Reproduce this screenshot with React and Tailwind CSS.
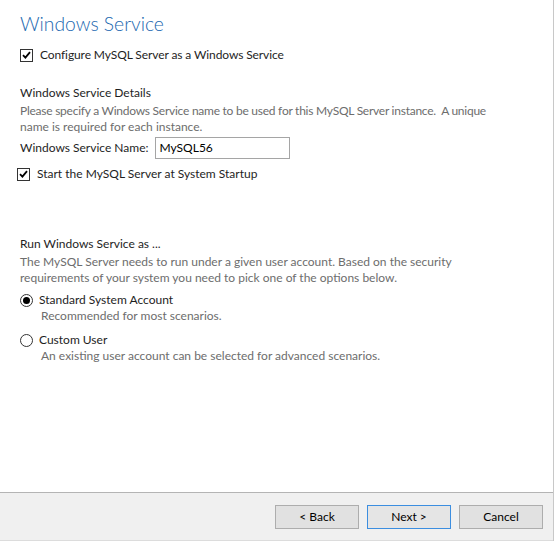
import React from "react";

const font = { fontFamily: 'Lato, "Liberation Sans", Arial, sans-serif' };

const Check = ({ checked }) => (
  <span className="flex h-[13px] w-[13px] shrink-0 items-center justify-center border border-[#333] bg-white">
    {checked && (
      <svg width="9" height="8" viewBox="0 0 9 8">
        <path d="M1 4.2 L3.4 6.6 L8 1.2" fill="none" stroke="#000" strokeWidth="1.8" />
      </svg>
    )}
  </span>
);

const Radio = ({ checked }) => (
  <span className="flex h-[13px] w-[13px] shrink-0 items-center justify-center rounded-full border border-[#333] bg-white">
    {checked && <span className="h-[7px] w-[7px] rounded-full bg-black" />}
  </span>
);

const Button = ({ children, focused }) => (
  <button
    className={
      "h-[24px] w-[84px] border text-[12px] text-black " +
      (focused ? "border-[#3c8ee0] bg-[#e5e5e5]" : "border-[#adadad] bg-[#e1e1e1]")
    }
  >
    {children}
  </button>
);

export default function App() {
  return (
    <div className="flex h-[542px] w-[556px] flex-col bg-white text-[12px] text-[#1e1e1e]" style={font}>
      <div className="flex flex-1 flex-col border-r border-[#c8c8c8] mr-[2px]">
        <div className="flex flex-1 flex-col px-[20px]">
          <h1 className="mt-[11px] text-[19.3px] font-light leading-[26px] text-[#2268b0]">Windows Service</h1>
          <label className="mt-[10px] flex items-center gap-[7px] leading-[16px]">
            <Check checked />
            <span className="tracking-[-0.1px]">Configure MySQL Server as a Windows Service</span>
          </label>

          <div className="mt-[22px] leading-[16px]">Windows Service Details</div>
          <div className="mt-[2px] leading-[16px] text-[#6d6d6d]">
            <span className="tracking-[-0.25px]">
              Please specify a Windows Service name to be used for this MySQL Server instance.&nbsp; A unique
            </span>
            <br />
            name is required for each instance.
          </div>
          <div className="mt-[2px] flex items-center gap-[7px]">
            <span>Windows Service Name:</span>
            <div className="flex h-[22px] w-[135px] items-center border border-[#a5a5a5] px-[3px] text-black">
              MySQL56
            </div>
          </div>
          <label className="ml-[-3px] mt-[7px] flex items-center gap-[7px] leading-[16px]">
            <Check checked />
            <span>Start the MySQL Server at System Startup</span>
          </label>

          <div className="mt-[54px] leading-[16px]">Run Windows Service as ...</div>
          <div className="mt-[2px] leading-[16px] text-[#6d6d6d]">
            The MySQL Server needs to run under a given user account. Based on the security
            <br />
            requirements of your system you need to pick one of the options below.
          </div>
          <label className="mt-[6px] flex items-center gap-[6px] leading-[16px]">
            <Radio checked />
            <span>Standard System Account</span>
          </label>
          <div className="ml-[21px] leading-[16px] text-[#6d6d6d]">Recommended for most scenarios.</div>
          <label className="mt-[8px] flex items-center gap-[6px] leading-[16px]">
            <Radio />
            <span>Custom User</span>
          </label>
          <div className="ml-[21px] leading-[16px] text-[#6d6d6d]">
            An existing user account can be selected for advanced scenarios.
          </div>
        </div>
        <div className="flex h-[49px] items-center justify-end gap-[8px] border-t border-b border-[#b4b4b4] border-b-[#dcdcdc] bg-[#f0f0f0] pr-[10px]">
          <Button>&lt; Back</Button>
          <Button focused>Next &gt;</Button>
          <Button>Cancel</Button>
        </div>
      </div>
      <div className="h-[1px]" />
    </div>
  );
}
